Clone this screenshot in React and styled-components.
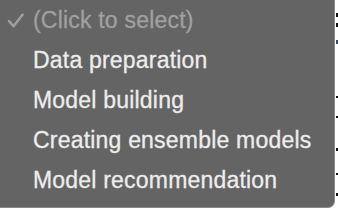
import React from "react";
import styled, { createGlobalStyle } from "styled-components";

const GlobalStyle = createGlobalStyle`
  html, body {
    margin: 0;
    padding: 0;
    background: #ffffff;
    overflow: hidden;
  }
`;

const Screen = styled.div`
  display: flex;
  width: 338px;
  height: 208px;
  overflow: hidden;
`;

const Menu = styled.ul`
  list-style: none;
  margin: 0;
  padding: 0 0 7px 0;
  width: 334px;
  height: 200px;
  flex-shrink: 0;
  background: #646464;
  border-right: 1px solid #8a8a8a;
  border-bottom: 1px solid #8a8a8a;
  border-bottom-right-radius: 7px;
  font-family: "Liberation Sans", Arial, sans-serif;
`;

const Item = styled.li`
  display: flex;
  align-items: center;
  height: 40px;
  padding-left: 33px;
  position: relative;
  font-size: 23px;
  letter-spacing: 0.2px;
  -webkit-text-stroke: 0.3px currentColor;
  color: ${(p) => (p.$placeholder ? "#a0a0a0" : "#ededed")};
  white-space: nowrap;
`;

const Check = styled.svg`
  position: absolute;
  left: 7px;
  top: 13px;
  width: 17px;
  height: 15px;
`;

const Backdrop = styled.div`
  display: flex;
  flex-direction: column;
  flex: 1;
  padding-left: 1px;
`;

const Mark = styled.div`
  height: ${(p) => p.$h}px;
  margin-top: ${(p) => p.$top}px;
  background: ${(p) => p.$color || "#111111"};
`;

const items = [
  "Data preparation",
  "Model building",
  "Creating ensemble models",
  "Model recommendation",
];

export default function App() {
  return (
    <>
      <GlobalStyle />
      <Screen>
        <Menu>
          <Item $placeholder>
            <Check viewBox="0 0 17 15">
              <polyline
                points="2,8 6.5,13.2 15.5,1.8"
                fill="none"
                stroke="#a0a0a0"
                strokeWidth="2.5"
                strokeLinecap="round"
                strokeLinejoin="round"
              />
            </Check>
            (Click to select)
          </Item>
          {items.map((label) => (
            <Item key={label}>{label}</Item>
          ))}
        </Menu>
        <Backdrop>
          <Mark $top={13} $h={4} />
          <Mark $top={6} $h={4} />
          <Mark $top={13} $h={4} $color="#3a4a6a" />
          <Mark $top={52} $h={2} />
          <Mark $top={18} $h={2} />
          <Mark $top={30} $h={3} />
          <Mark $top={22} $h={2} />
          <Mark $top={18} $h={3} />
        </Backdrop>
      </Screen>
    </>
  );
}
